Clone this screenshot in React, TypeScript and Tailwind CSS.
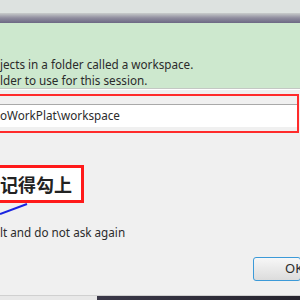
import React from 'react';

const font = { fontFamily: '"Noto Sans", "Noto Sans CJK SC", sans-serif' };

const App = () => {
  return (
    <div className="w-[300px] h-[300px] overflow-hidden bg-[#f0f0f0] flex flex-col text-[#2b2b2b]" style={font}>
      {/* window chrome */}
      <div className="h-[13px] shrink-0 bg-[#dde2e0]" />
      <div className="h-[10px] shrink-0 bg-gradient-to-b from-[#c9cdcc] via-[#8f8d9e] to-[#6c6884]" />

      {/* header */}
      <div className="h-[65px] shrink-0 bg-[#cde8ce] pt-[33px] text-[11.7px] leading-[16px]">
        <div className="whitespace-nowrap">jects in a folder called a workspace.</div>
        <div className="whitespace-nowrap">lder to use for this session.</div>
      </div>
      <div className="h-px shrink-0 bg-[#c4c8c4]" />
      <div className="h-px shrink-0 bg-white" />

      {/* workspace field */}
      <div className="mt-[4px] mr-[1px] shrink-0 border-y-2 border-r-2 border-[#ff2b2b] pt-[8px] pb-[4px]">
        <div className="h-[23px] border-t border-[#a9a9a9] bg-white flex items-center text-[11.7px] whitespace-nowrap">
          oWorkPlat\workspace
        </div>
      </div>

      {/* annotation */}
      <div className="mt-[32px] w-[84px] h-[38px] shrink-0 border-y-[3px] border-r-[3px] border-[#ff1a1a] bg-white flex items-center text-[18px] font-bold text-[#222] whitespace-nowrap" style={{ fontFamily: '"Noto Sans CJK SC", sans-serif' }}>
        记得勾上
      </div>
      <svg className="shrink-0" width="40" height="13" viewBox="0 0 40 13">
        <line x1="0" y1="11" x2="27" y2="1" stroke="#1a24e0" strokeWidth="2" />
      </svg>

      <div className="mt-[8px] text-[11.7px] leading-[16px] whitespace-nowrap">lt and do not ask again</div>

      {/* buttons */}
      <div className="mt-[17px] flex justify-end shrink-0">
        <div className="w-[48px] h-[24px] -mr-[1px] rounded-[3px] border border-[#3c9ad8] bg-gradient-to-b from-[#f7f7f7] to-[#dcdcdc] flex items-center pl-[31px] text-[13px] overflow-hidden whitespace-nowrap">
          OK
        </div>
      </div>

      <div className="flex-1" />
      <div className="h-px shrink-0 bg-[#d0d0d0]" />
      <div className="h-[4px] shrink-0 flex">
        <div className="w-[97px] bg-[#e8e8e8]" />
        <div className="flex-1 bg-gradient-to-r from-[#3a3848] to-[#26242e]" />
      </div>
    </div>
  );
};

export default App;
